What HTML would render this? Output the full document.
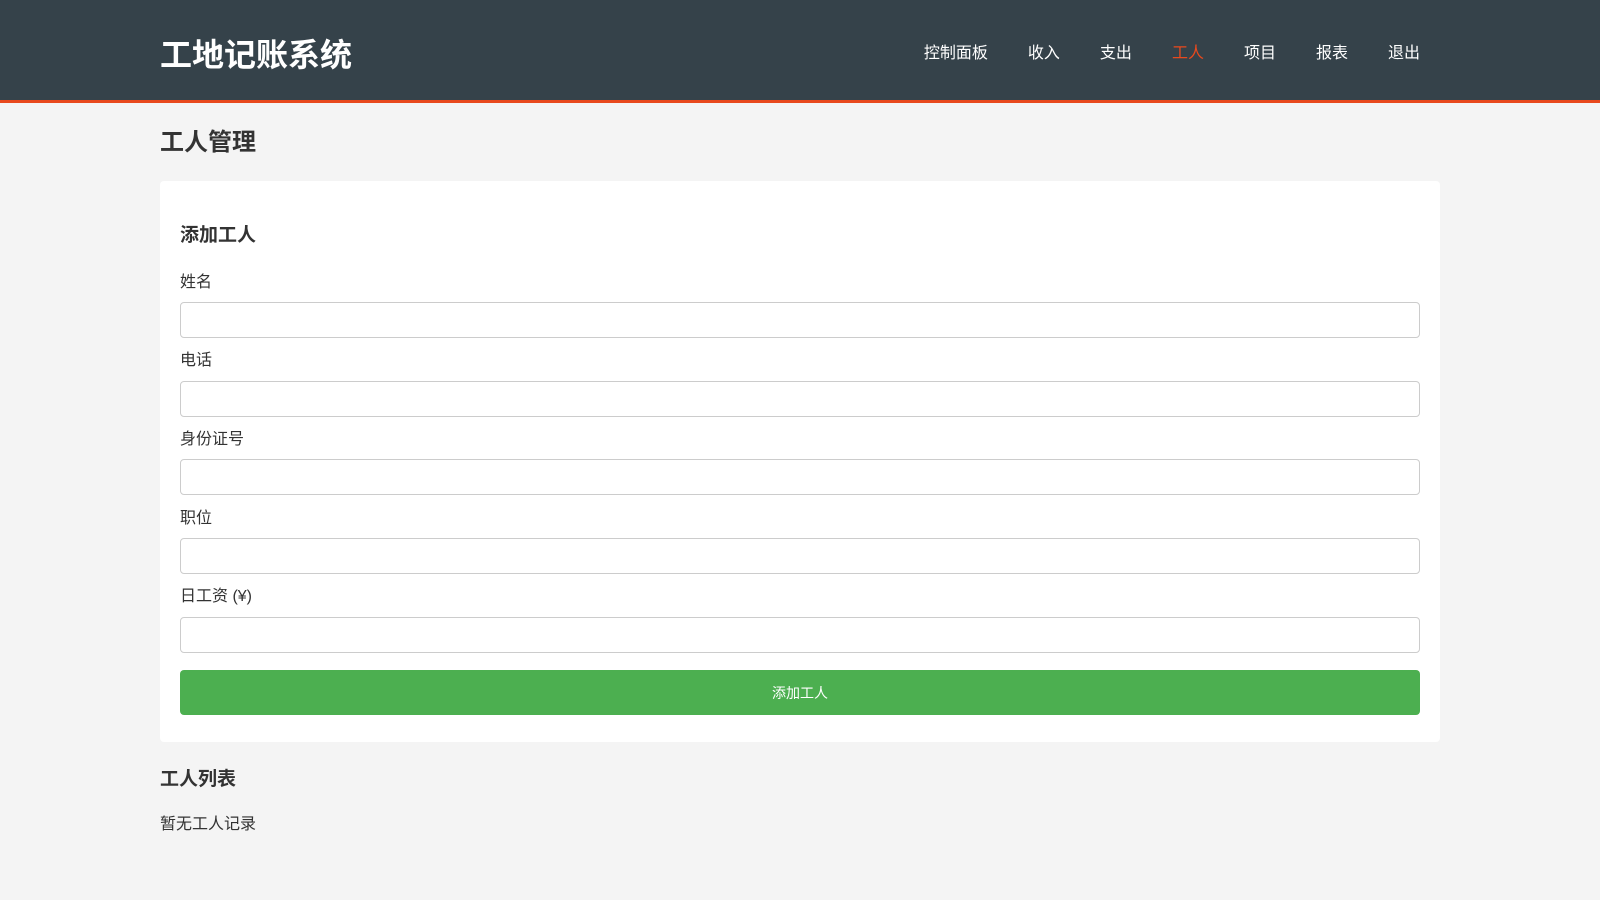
<!DOCTYPE html>
<html><head><meta charset="utf-8"><style>
*{box-sizing:border-box;margin:0;padding:0}
body{width:1600px;height:900px;background:#f4f4f4;font-family:"Liberation Sans","Noto Sans CJK SC",sans-serif;color:#333;overflow:hidden}
header{height:103px;background:#35424a;border-bottom:3px solid #e8491d;position:relative}
.logo{position:absolute;left:160px;top:33px;font-size:32px;font-weight:bold;color:#fff;line-height:44px}
nav{position:absolute;right:160px;top:42px;display:flex}
nav a{color:#fff;font-size:16px;line-height:24px;padding:0 20px;text-decoration:none}
nav a.on{color:#e8491d}
h1{position:absolute;left:160px;top:127px;font-size:24px;line-height:32px}
.card{position:absolute;left:160px;top:181px;width:1280px;height:561px;background:#fff;border-radius:4px}
h2{position:absolute;left:180px;top:222px;font-size:19px;line-height:28px}
.lbl{position:absolute;left:180px;font-size:16px;line-height:22px;color:#333}
.inp{position:absolute;left:180px;width:1240px;height:36px;border:1px solid #ccc;border-radius:4px;background:#fff}
.btn{position:absolute;left:180px;top:670px;width:1240px;height:45px;background:#4caf50;border-radius:4px;color:#fff;font-size:14px;text-align:center;line-height:47px}
h3{position:absolute;left:160px;top:767px;font-size:19px;line-height:26px}
.empty{position:absolute;left:160px;top:814px;font-size:16px;line-height:22px}
</style></head><body>
<header><div class="logo">工地记账系统</div>
<nav><a>控制面板</a><a>收入</a><a>支出</a><a class="on">工人</a><a>项目</a><a>报表</a><a>退出</a></nav></header>
<h1>工人管理</h1>
<div class="card"></div>
<h2>添加工人</h2>
<div class="lbl" style="top:272px">姓名</div><div class="inp" style="top:302px"></div>
<div class="lbl" style="top:350px">电话</div><div class="inp" style="top:381px"></div>
<div class="lbl" style="top:429px">身份证号</div><div class="inp" style="top:459px"></div>
<div class="lbl" style="top:508px">职位</div><div class="inp" style="top:538px"></div>
<div class="lbl" style="top:586px">日工资 (¥)</div><div class="inp" style="top:617px"></div>
<div class="btn">添加工人</div>
<h3>工人列表</h3>
<div class="empty">暂无工人记录</div>
</body></html>
